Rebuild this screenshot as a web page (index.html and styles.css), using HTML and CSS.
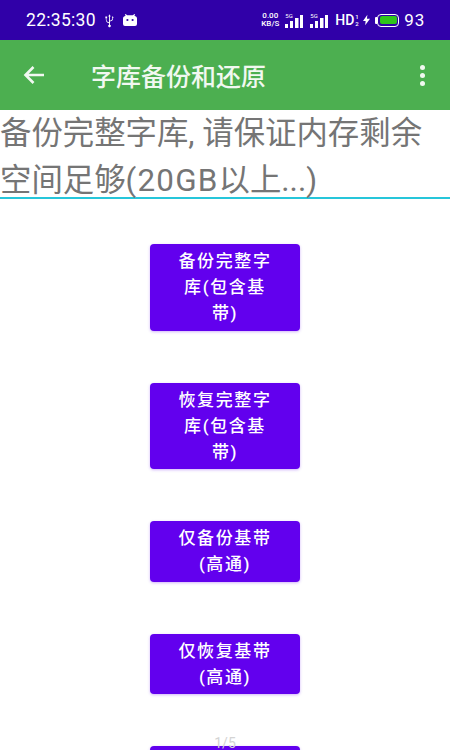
FILE: index.html
```html
<!DOCTYPE html>
<html lang="zh-CN">
<head>
    <meta charset="UTF-8">
    <title>字库备份和还原</title>
    <link rel="stylesheet" href="styles.css">
</head>
<body>
    <div class="status">
        <div class="status-left">
            <span class="clock">22:35:30</span>
            <svg class="usb" width="9" height="15" viewBox="0 0 10 15">
                <path d="M5 0.5 L3.6 3 H4.500 V9.500 C2.600 9 1.600 8 1.600 6 V5 H2.400 V3 H0.400 V5 H0.900 V6 C0.900 8.500 2.200 10 4.500 10.600 V12.200 A1.400 1.400 0 1 0 5.500 12.200 V8.600 C7.800 8.200 9 7 9 5 V4.500 H9.600 L8.600 2.600 L7.600 4.500 H8.200 V5 C8.200 6.500 7.200 7.400 5.500 7.700 V3 H6.400 Z" fill="#fff"/>
            </svg>
            <svg class="bot" width="14" height="12" viewBox="0 0 14 12">
                <path d="M2.500 0 L4.300 1.300 H9.700 L11.500 0 L12.200 .8 L11.300 1.700 C13 2.200 14 3 14 4.500 V10 Q14 12 12 12 H2 Q0 12 0 10 V4.500 C0 3 1 2.200 2.700 1.700 L1.800 .8 Z" fill="#fff"/>
                <circle cx="4.400" cy="6" r="1.100" fill="#3000a8"/>
                <circle cx="9.600" cy="6" r="1.100" fill="#3000a8"/>
            </svg>
        </div>
        <div class="status-right">
            <span class="speed">0.00<br>KB/S</span>
            <span class="net"><i class="net-tag">5G</i>
                <svg width="18" height="13" viewBox="0 0 18 13"><path d="M0 9h3v4H0zM5 6h3v7H5zM10 3h3.500v10H10zM15 0h3v13h-3z" fill="#fff"/></svg>
            </span>
            <span class="net"><i class="net-tag">5G</i>
                <svg width="18" height="13" viewBox="0 0 18 13"><path d="M0 9h3v4H0zM5 6h3v7H5zM10 3h3.500v10H10zM15 0h3v13h-3z" fill="#fff"/></svg>
            </span>
            <span class="hd">HD<span class="hd-sub">1<br>2</span></span>
            <svg class="bolt" width="7" height="12" viewBox="0 0 8 12"><path d="M5 0 L0 7 H3 L2.500 12 L8 4.500 H4.500 Z" fill="#fff"/></svg>
            <span class="battery"><span class="battery-fill"></span></span>
            <span class="level">93</span>
        </div>
    </div>

    <div class="toolbar">
        <svg class="back" width="22" height="20" viewBox="0 0 22 20">
            <path d="M21 10H3M10.500 2 L2.500 10 L10.500 18" fill="none" stroke="#f1f8f1" stroke-width="2.600"/>
        </svg>
        <span class="title">字库备份和还原</span>
        <div class="more"><i></i><i></i><i></i></div>
    </div>

    <div class="notice">
        <div>备份完整字库, 请保证内存剩余</div>
        <div>空间足够<span class="wide">(20GB</span>以上...)</div>
    </div>

    <div class="actions">
        <button class="btn">备份完整字库(包含基带)</button>
        <button class="btn">恢复完整字库(包含基带)</button>
        <button class="btn">仅备份基带(高通)</button>
        <button class="btn">仅恢复基带(高通)</button>
        <button class="btn btn-cut"></button>
    </div>

    <div class="pager">1/5</div>
</body>
</html>
```

FILE: styles.css
```css
html,
body {
    margin: 0;
    height: 100%;
}
body {
    position: relative;
    display: flex;
    flex-direction: column;
    height: 750px;
    overflow: hidden;
    background: #fff;
    font-family: Roboto, "Noto Sans CJK SC", sans-serif;
}
.status {
    display: flex;
    flex: none;
    justify-content: space-between;
    align-items: center;
    height: 40px;
    padding: 0 25px 0 26px;
    background: #3000a8;
    color: #fff;
}
.status-left,
.status-right {
    display: flex;
    align-items: center;
}
.clock {
    font-size: 17.500px;
    letter-spacing: 0.3px;
    margin-right: 9px;
}
.usb {
    margin-right: 9px;
}
.speed {
    width: 18px;
    font-size: 8px;
    line-height: 8px;
    font-weight: 500;
    text-align: center;
    margin-right: 6px;
}
.net {
    position: relative;
    display: flex;
    width: 18px;
    margin-right: 7px;
}
.net svg {
    margin-top: 2px;
}
.net-tag {
    position: absolute;
    top: -1px;
    left: 0;
    font-size: 6px;
    line-height: 7px;
    font-style: normal;
}
.hd {
    display: flex;
    align-items: center;
    width: 21px;
    font-size: 14px;
    font-weight: 500;
    margin-right: 7px;
}
.hd-sub {
    font-size: 6px;
    line-height: 7px;
    margin-left: 1px;
}
.bolt {
    margin-right: 7px;
}
.battery {
    position: relative;
    display: block;
    box-sizing: border-box;
    width: 22px;
    height: 13px;
    padding: 1.500px;
    border: 1px solid #fff;
    border-radius: 4px;
    margin-right: 5px;
}
.battery::before {
    content: "";
    position: absolute;
    left: -3px;
    top: 2px;
    width: 2px;
    height: 7px;
    background: #fff;
    border-radius: 1px 0 0 1px;
}
.battery-fill {
    display: block;
    height: 100%;
    background: #2fc41c;
    border-radius: 2px;
}
.level {
    font-size: 17px;
    letter-spacing: 0.8px;
}
.toolbar {
    display: flex;
    flex: none;
    align-items: center;
    height: 70px;
    background: #4caf50;
    color: #f1f8f1;
}
.back {
    margin-left: 23px;
}
.title {
    flex: 1;
    margin-left: 46px;
    font-size: 25px;
    font-weight: 500;
}
.more {
    display: flex;
    flex-direction: column;
    gap: 3px;
    margin-right: 25px;
}
.more i {
    display: block;
    width: 5px;
    height: 5px;
    border-radius: 50%;
    background: #f1f8f1;
}
.notice {
    flex: none;
    box-sizing: border-box;
    height: 89px;
    padding-top: 1px;
    border-bottom: 2px solid #26c6da;
    font-size: 31.400px;
    line-height: 46.500px;
    color: #757575;
}
.wide {
    letter-spacing: 1.200px;
}
.actions {
    display: flex;
    flex: 1;
    flex-direction: column;
    align-items: center;
    gap: 52px;
    min-height: 0;
    padding-top: 45px;
    overflow: hidden;
}
.btn {
    flex: none;
    width: 150px;
    padding: 4px 24px;
    border: none;
    border-radius: 4px;
    background: #6200ee;
    color: #fff;
    font-family: inherit;
    font-size: 17px;
    font-weight: 500;
    line-height: 26.200px;
    letter-spacing: 1.600px;
    box-shadow: 0 1px 3px rgba(98, 0, 238, 0.3);
}
.btn-cut {
    height: 60px;
}
.pager {
    position: absolute;
    left: 0;
    right: 0;
    bottom: 0;
    text-align: center;
    font-size: 14px;
    line-height: 14px;
    color: #d4d4d4;
}
```
